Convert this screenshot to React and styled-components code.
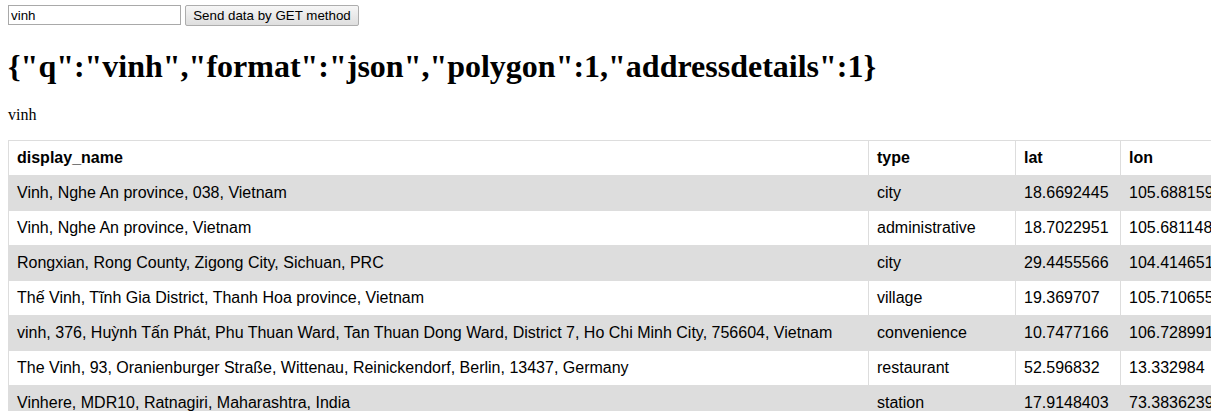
import React, { useState } from 'react';
import styled, { createGlobalStyle } from 'styled-components';

const GlobalStyle = createGlobalStyle`
  html {
    overflow: hidden;
  }
  body {
    margin: 5px 8px 8px 8px;
    background: #fff;
    color: #000;
    font-family: "Liberation Serif", "Times New Roman", serif;
  }
`;

const Form = styled.form`
  display: flex;
  align-items: flex-start;
  gap: 4px;
  height: 22px;
`;

const TextInput = styled.input`
  box-sizing: border-box;
  width: 173px;
  height: 20px;
  margin: 0;
  padding: 1px 2px;
  border: 1px solid #a9a9a9;
  font-family: "Liberation Sans", Arial, sans-serif;
  font-size: 13.33px;
  color: #000;
  outline: none;
`;

const Btn = styled.button`
  box-sizing: border-box;
  width: 174px;
  height: 21px;
  margin: 0;
  padding: 0 6px;
  border: 1px solid #adadad;
  border-radius: 2px;
  background: linear-gradient(#f6f6f6, #dedede);
  font-family: "Liberation Sans", Arial, sans-serif;
  font-size: 13.33px;
  color: #000;
  cursor: pointer;
`;

const Title = styled.h1`
  font-size: 32px;
  font-weight: bold;
  margin: 21px 0 21px 0;
  line-height: 37px;
`;

const Echo = styled.p`
  font-size: 16px;
  margin: 0 0 16px 0;
`;

const TableWrap = styled.div`
  width: calc(100vw - 8px);
  overflow: hidden;
`;

const Table = styled.table`
  border-collapse: collapse;
  table-layout: fixed;
  width: 1412px;
  font-family: "Liberation Sans", Arial, sans-serif;
  font-size: 16px;
`;

const Row = styled.tr`
  background-color: ${p => (p.$shade ? '#dddddd' : '#ffffff')};
`;

const Head = styled.th`
  box-sizing: border-box;
  width: ${p => p.$w}px;
  border: 1px solid #ddd;
  padding: 8px;
  text-align: left;
  font-weight: bold;
  white-space: nowrap;
`;

const Cell = styled.td`
  border: 1px solid #ddd;
  padding: 8px;
  white-space: nowrap;
  overflow: hidden;
`;

const columns = [
  { key: 'display_name', w: 860 },
  { key: 'type', w: 147 },
  { key: 'lat', w: 105 },
  { key: 'lon', w: 300 },
];

const places = [
  ['Vinh, Nghe An province, 038, Vietnam', 'city', '18.6692445', '105.6881594'],
  ['Vinh, Nghe An province, Vietnam', 'administrative', '18.7022951', '105.6811489'],
  ['Rongxian, Rong County, Zigong City, Sichuan, PRC', 'city', '29.4455566', '104.4146513'],
  ['Thế Vinh, Tĩnh Gia District, Thanh Hoa province, Vietnam', 'village', '19.369707', '105.710655'],
  ['vinh, 376, Huỳnh Tấn Phát, Phu Thuan Ward, Tan Thuan Dong Ward, District 7, Ho Chi Minh City, 756604, Vietnam', 'convenience', '10.7477166', '106.7289916'],
  ['The Vinh, 93, Oranienburger Straße, Wittenau, Reinickendorf, Berlin, 13437, Germany', 'restaurant', '52.596832', '13.332984'],
  ['Vinhere, MDR10, Ratnagiri, Maharashtra, India', 'station', '17.9148403', '73.3836239'],
];

export default function App() {
  const [q, setQ] = useState('vinh');
  const params = { q: 'vinh', format: 'json', polygon: 1, addressdetails: 1 };

  return (
    <>
      <GlobalStyle />
      <Form onSubmit={e => e.preventDefault()}>
        <TextInput value={q} onChange={e => setQ(e.target.value)} />
        <Btn type="submit">Send data by GET method</Btn>
      </Form>
      <Title>{JSON.stringify(params)}</Title>
      <Echo>vinh</Echo>
      <TableWrap>
        <Table>
          <thead>
            <Row>
              {columns.map(c => (
                <Head key={c.key} $w={c.w}>{c.key}</Head>
              ))}
            </Row>
          </thead>
          <tbody>
            {places.map((p, i) => (
              <Row key={i} $shade={i % 2 === 0}>
                {p.map((v, j) => (
                  <Cell key={j}>{v}</Cell>
                ))}
              </Row>
            ))}
          </tbody>
        </Table>
      </TableWrap>
    </>
  );
}
